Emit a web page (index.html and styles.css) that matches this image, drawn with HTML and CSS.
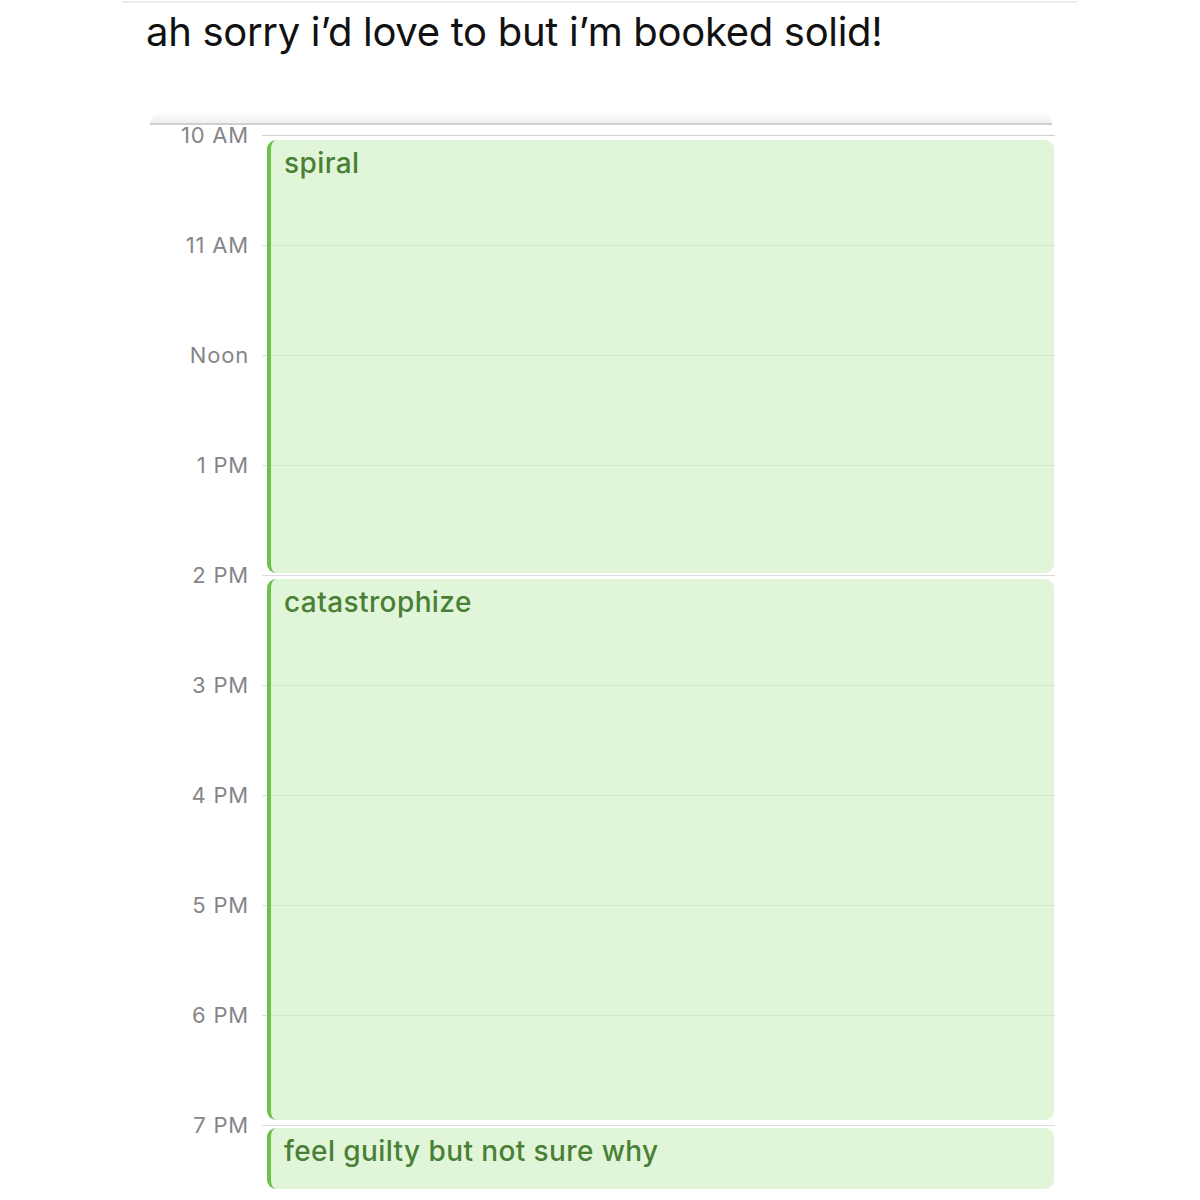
FILE: index.html
```html
<!DOCTYPE html>
<html lang="en">
<head>
    <meta charset="UTF-8">
    <meta name="viewport" content="width=device-width, initial-scale=1.0">
    <title>booked solid</title>
    <link rel="stylesheet" href="styles.css">
</head>
<body>
    <div class="post">
        <div class="post-rule"></div>
        <p class="post-text">ah sorry i’d love to but i’m booked solid!</p>
    </div>

    <div class="calendar">
        <div class="cal-top"></div>
        <div class="cal-grid">
            <div class="hour"><span class="hour-label">10 AM</span><span class="hour-line"></span></div>
            <div class="hour"><span class="hour-label">11 AM</span><span class="hour-line"></span></div>
            <div class="hour"><span class="hour-label">Noon</span><span class="hour-line"></span></div>
            <div class="hour"><span class="hour-label">1 PM</span><span class="hour-line"></span></div>
            <div class="hour"><span class="hour-label">2 PM</span><span class="hour-line"></span></div>
            <div class="hour"><span class="hour-label">3 PM</span><span class="hour-line"></span></div>
            <div class="hour"><span class="hour-label">4 PM</span><span class="hour-line"></span></div>
            <div class="hour"><span class="hour-label">5 PM</span><span class="hour-line"></span></div>
            <div class="hour"><span class="hour-label">6 PM</span><span class="hour-line"></span></div>
            <div class="hour"><span class="hour-label">7 PM</span><span class="hour-line"></span></div>

            <!-- events sit over the hour lines, placed by start time / duration -->
            <div class="event" style="top: 15px; height: 433px;">spiral</div>
            <div class="event" style="top: 454px; height: 541px;">catastrophize</div>
            <div class="event" style="top: 1003px; height: 61px;">feel guilty but not sure why</div>
        </div>
    </div>
</body>
</html>
```

FILE: styles.css
```css
:root {
    --green: #6cc24a;
    --event-bg: rgba(205, 238, 192, 0.6);
    --event-text: #4a7f36;
    --label: #85858a;
    --line: #dcdcdc;
}
body {
    margin: 0;
    background: #fff;
    font-family: 'Inter', 'Noto Sans', sans-serif;
    color: #111;
}
.post {
    padding-top: 1px;
}
.post-rule {
    margin-left: 122px;
    width: 955px;
    height: 2px;
    background: #ececec;
}
.post-text {
    margin: 5px 0 0 146px;
    font-size: 40px;
    line-height: 48px;
    letter-spacing: -0.3px;
}
.calendar {
    margin: 57px 0 0 150px;
    width: 905px;
}
.cal-top {
    height: 10px;
    margin-right: 3px;
    border-radius: 10px 10px 0 0;
    background: linear-gradient(#fbfbfb, #f0f0f0);
    border-bottom: 2px solid #cfcfcf;
}
.cal-grid {
    position: relative;
    height: 1076px;
}
.hour {
    height: 110px;
    display: flex;
    align-items: flex-start;
}
.hour-label {
    width: 99px;
    text-align: right;
    font-size: 22px;
    line-height: 22px;
    margin-top: -1px;
    color: var(--label);
    letter-spacing: 0.8px;
}
.hour-line {
    flex: 1;
    margin: 10px 0 0 13px;
    border-top: 1.5px solid var(--line);
}
.hour:first-child .hour-line {
    border-top-color: #d0d0d0;
}
.event {
    position: absolute;
    left: 117px;
    width: 787px;
    box-sizing: border-box;
    padding: 7px 0 0 13px;
    border-left: 4px solid var(--green);
    border-radius: 9px;
    background: var(--event-bg);
    color: var(--event-text);
    font-size: 28px;
    line-height: 32px;
    font-weight: 500;
    letter-spacing: 0.4px;
}
```
